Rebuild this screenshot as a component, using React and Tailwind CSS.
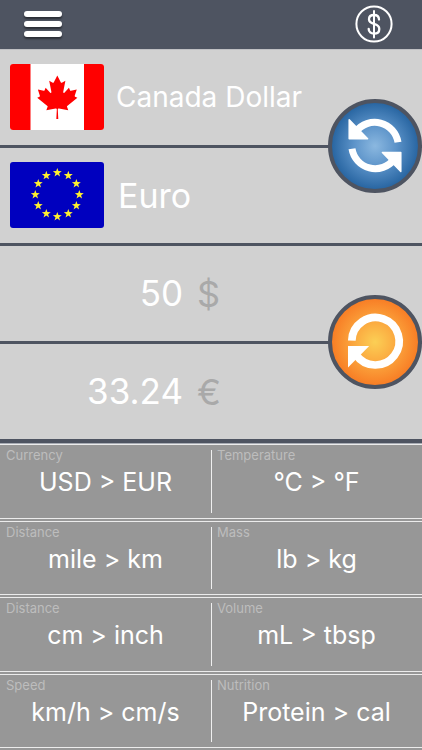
import { useState } from "react";

const starPoints = Array.from({ length: 10 }, (_, i) => {
  const r = i % 2 === 0 ? 4.7 : 1.9;
  const a = (i * Math.PI) / 5;
  return `${(r * Math.sin(a)).toFixed(2)},${(-r * Math.cos(a)).toFixed(2)}`;
}).join(" ");

function CanadaFlag() {
  return (
    <svg viewBox="0 0 94 66" className="w-[94px] h-[66px] shrink-0 rounded-[3px]" aria-hidden="true">
      <rect width="94" height="66" fill="#fff" />
      <rect width="20.5" height="66" fill="#ff0000" />
      <rect x="74" width="20" height="66" fill="#ff0000" />
      <path
        transform="translate(47.3 33) scale(0.0108)"
        fill="#ff0000"
        d="m-90 2030 45-863a95 95 0 0 0-111-98l-859 151 116-320a65 65 0 0 0-20-73l-941-762 212-99a65 65 0 0 0 34-79l-186-572 542 115a65 65 0 0 0 73-38l105-247 423 454a65 65 0 0 0 111-57l-204-1052 327 189a65 65 0 0 0 91-27l332-652 332 652a65 65 0 0 0 91 27l327-189-204 1052a65 65 0 0 0 111 57l423-454 105 247a65 65 0 0 0 73 38l542-115-186 572a65 65 0 0 0 34 79l212 99-941 762a65 65 0 0 0-20 73l116 320-859-151a95 95 0 0 0-111 98l45 863z"
      />
    </svg>
  );
}

function EuroFlag() {
  return (
    <svg viewBox="0 0 94 66" className="w-[94px] h-[66px] shrink-0 rounded-[3px]" aria-hidden="true">
      <rect width="94" height="66" fill="#0000bf" />
      {Array.from({ length: 12 }, (_, i) => {
        const a = (i * Math.PI) / 6;
        return (
          <polygon
            key={i}
            points={starPoints}
            fill="#fff02e"
            transform={`translate(${47.3 + 22 * Math.sin(a)} ${32.6 - 22 * Math.cos(a)})`}
          />
        );
      })}
    </svg>
  );
}

function CurrencyRow({ flag, name, size }) {
  return (
    <button type="button" className="flex w-full h-[98px] items-center border-b-3 border-[#4e5461] pb-px pl-[10px] text-left">
      {flag}
      <span className={size}>{name}</span>
    </button>
  );
}

function AmountRow({ id, name, value, onChange, symbol, size }) {
  return (
    <div className={`flex items-center border-[#4e5461] ${size}`}>
      <input
        id={id}
        aria-label={name}
        inputMode="decimal"
        value={value}
        readOnly={!onChange}
        onChange={onChange}
        className="w-[183px] bg-transparent text-right text-[35px] font-normal text-white outline-none"
      />
      <label htmlFor={id} className="ml-[14px] text-[36px] font-normal text-[#a9a9a9]">{symbol}</label>
    </div>
  );
}

const shortcuts = [
  ["Currency", "USD > EUR"],
  ["Temperature", "°C > °F"],
  ["Distance", "mile > km"],
  ["Mass", "lb > kg"],
  ["Distance", "cm > inch"],
  ["Volume", "mL > tbsp"],
  ["Speed", "km/h > cm/s"],
  ["Nutrition", "Protein > cal"],
];

const rows = [0, 2, 4, 6].map((i) => shortcuts.slice(i, i + 2));

export default function App() {
  const [amount, setAmount] = useState("50");
  const result = amount === "50" ? "33.24" : (Number(amount) * 0.6648 || 0).toFixed(2);

  return (
    <div className="flex min-h-screen flex-col bg-[#d1d1d1] font-['Inter','Liberation_Sans',sans-serif]">
      <header className="flex h-[50px] items-center justify-between border-b border-[#bfc0c3] bg-[#4e5461] pb-[2px] pl-6 pr-[29px]">
        <button type="button" aria-label="Menu" className="flex w-[38px] flex-col gap-1">
          <span className="h-[6px] rounded-[3px] bg-white shadow-[0_2px_2px_rgba(0,0,0,0.45)]" />
          <span className="h-[6px] rounded-[3px] bg-white shadow-[0_2px_2px_rgba(0,0,0,0.45)]" />
          <span className="h-[6px] rounded-[3px] bg-white shadow-[0_2px_2px_rgba(0,0,0,0.45)]" />
        </button>
        <button type="button" aria-label="Currency">
          <svg viewBox="0 0 38 38" className="size-[38px]" fill="none" stroke="#fff" strokeLinecap="round">
            <circle cx="19" cy="19" r="17.6" strokeWidth="2" />
            <path strokeWidth="2" d="M19 6v26.500" />
            <path strokeWidth="2.3" d="M24 14.500c0-3-2-4.500-5-4.500s-5 1.700-5 4.300c0 2.900 2.100 3.800 5 4.600s5.300 2 5.300 5-2.300 4.700-5.300 4.700-5.300-1.700-5.300-4.700" />
          </svg>
        </button>
      </header>

      <section className="relative">
        <CurrencyRow flag={<CanadaFlag />} name="Canada Dollar" size="ml-3 text-[28px] font-normal text-white" />
        <CurrencyRow flag={<EuroFlag />} name="Euro" size="ml-[14px] text-[34px] font-normal text-white" />
        <button
          type="button"
          aria-label="Swap currencies"
          className="absolute right-0 top-[49px] size-[94px] rounded-full border-4 border-[#4e5461] bg-[radial-gradient(circle,#8bb8e0_0%,#5c93c9_35%,#2a67a3_70%)]"
        >
          <svg viewBox="0 0 86 86" className="size-full">
            <g fill="none" stroke="#fff" strokeWidth="7">
              <path d="M24 28.500A23.600 23.600 0 0 1 66 39.300" />
              <path d="M20 45.800A23.600 23.600 0 0 0 62 56.500" />
            </g>
            <g fill="#fff" stroke="#fff" strokeWidth="1.5" strokeLinejoin="round">
              <path d="M17.200 16.800V35.800H35.600Z" />
              <path d="M68.800 68.400V49.400H50.400Z" />
            </g>
          </svg>
        </button>
      </section>

      <section className="relative">
        <AmountRow
          id="amount"
          name="Canada Dollar amount"
          value={amount}
          onChange={(e) => setAmount(e.target.value)}
          symbol="$"
          size="h-[98px] border-b-3"
        />
        <AmountRow id="result" name="Euro amount" value={result} symbol="€" size="h-[99px] border-b-4" />
        <button
          type="button"
          aria-label="Reset"
          onClick={() => setAmount("50")}
          className="absolute right-0 top-[49px] size-[94px] rounded-full border-4 border-[#4e5461] bg-[radial-gradient(circle,#fbcf55_0%,#fba83f_35%,#f87f26_70%)]"
        >
          <svg viewBox="0 0 86 86" className="size-full">
            <path fill="none" stroke="#fff" strokeWidth="7.7" d="M19.800 41.700A23.700 23.700 0 1 1 24 55.800" />
            <path fill="#fff" d="M16 47H37.200L16 68.500Z" />
          </svg>
        </button>
      </section>

      <section className="flex flex-1 flex-col border-t border-[#a8acb4] bg-[#979797]">
        {rows.map((row, i) => (
          <div key={i} className="flex flex-1 flex-col border-t border-[#ececec] pb-[2px]">
            <div className="grid flex-1 grid-cols-2 border-b border-[#ececec]">
              {row.map(([kind, text], j) => (
                <button key={text} type="button" className="relative flex min-h-[70px] flex-col py-1 text-left">
                  {j === 1 && <span className="absolute inset-y-[5px] left-0 w-px bg-[#f0f0f0]" />}
                  <span className="pl-[6px] text-[13px] leading-[13px] text-[#bdbdbd]">{kind}</span>
                  <span className="mt-1 w-full text-center text-[25px] leading-[32px] font-normal text-white">{text}</span>
                </button>
              ))}
            </div>
          </div>
        ))}
      </section>
    </div>
  );
}
